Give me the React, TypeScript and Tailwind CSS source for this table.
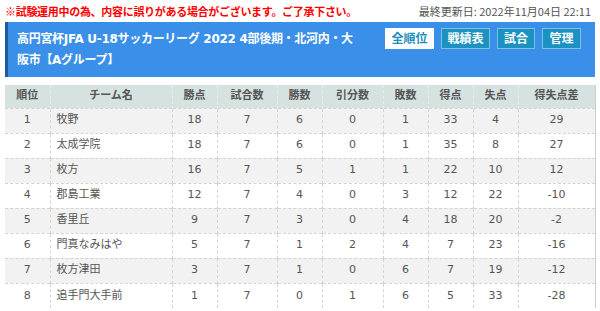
import React from "react";

const rows: (string | number)[][] = [
  [1, "牧野", 18, 7, 6, 0, 1, 33, 4, 29],
  [2, "太成学院", 18, 7, 6, 0, 1, 35, 8, 27],
  [3, "枚方", 16, 7, 5, 1, 1, 22, 10, 12],
  [4, "郡島工業", 12, 7, 4, 0, 3, 12, 22, -10],
  [5, "香里丘", 9, 7, 3, 0, 4, 18, 20, -2],
  [6, "門真なみはや", 5, 7, 1, 2, 4, 7, 23, -16],
  [7, "枚方津田", 3, 7, 1, 0, 6, 7, 19, -12],
  [8, "追手門大手前", 1, 7, 0, 1, 6, 5, 33, -28],
];

const heads = ["順位", "チーム名", "勝点", "試合数", "勝数", "引分数", "敗数", "得点", "失点", "得失点差"];
const widths = ["w-[45px]", "w-[122px]", "w-[45px]", "w-[60px]", "w-[45px]", "w-[61px]", "w-[45px]", "w-[45px]", "w-[45px]", "w-[77px]"];

export default function App() {
  return (
    <div
      className="w-[600px] h-[311px] bg-white overflow-hidden"
      style={{ fontFamily: '"DejaVu Sans", "Noto Sans CJK JP", sans-serif' }}
    >
      <div
        className="h-[22px] flex items-center justify-between pl-[5px] pr-[9px]"
        style={{ fontFamily: '"Noto Sans CJK JP", sans-serif' }}
      >
        <span className="text-[11px] font-bold text-[#ff0000] tracking-[-0.3px]">
          ※試験運用中の為、内容に誤りがある場合がございます。ご了承下さい。
        </span>
        <span className="text-[11px] text-[#555]">最終更新日: 2022年11月04日 22:11</span>
      </div>
      <div className="mx-[5px] h-[55px] bg-[#3a8fe8] border-l-[3px] border-[#1b5d9c] flex justify-between pl-[9px] pr-[14px]">
        <div className="w-[344px] pt-[7px] text-[12px] leading-[21px] font-bold text-white tracking-[-0.3px]">
          高円宮杯JFA U-18サッカーリーグ 2022 4部後期・北河内・大阪市【Aグループ】
        </div>
        <div className="flex gap-[7px] pt-[6px] items-start">
          <div className="h-[21px] w-[49px] bg-white text-[#1c8ec0] text-[12px] font-bold flex items-center justify-center">全順位</div>
          <div className="h-[21px] w-[49px] bg-[#1b92c2] border border-[#7cc2e4] text-white text-[12px] font-bold flex items-center justify-center">戦績表</div>
          <div className="h-[21px] w-[38px] bg-[#1b92c2] border border-[#7cc2e4] text-white text-[12px] font-bold flex items-center justify-center">試合</div>
          <div className="h-[21px] w-[39px] bg-[#1b92c2] border border-[#7cc2e4] text-white text-[12px] font-bold flex items-center justify-center">管理</div>
        </div>
      </div>
      <div className="h-[8px]" />
      <table className="ml-[5px] w-[590px] border-collapse table-fixed border-r border-[#ccc]">
        <thead>
          <tr className="h-[23px] bg-[#d5e2e0]">
            {heads.map((h, i) => (
              <th
                key={h}
                className={`${widths[i]} text-[11px] font-bold text-[#555] text-center border-l border-dashed border-[#e8eeee] first:border-l-0 p-0`}
              >
                {h}
              </th>
            ))}
          </tr>
        </thead>
        <tbody>
          {rows.map((r, ri) => (
            <tr key={ri} className={`h-[25px] ${ri % 2 === 0 ? "bg-[#f2f2f2]" : "bg-white"}`}>
              {r.map((c, ci) => (
                <td
                  key={ci}
                  className={`text-[11px] text-[#555] p-0 border-t border-l border-dashed border-[#d4d4d4] first:border-l-0 ${
                    ci === 1 ? "text-left pl-[6px]" : "text-center"
                  }`}
                >
                  {c}
                </td>
              ))}
            </tr>
          ))}
        </tbody>
      </table>
    </div>
  );
}
